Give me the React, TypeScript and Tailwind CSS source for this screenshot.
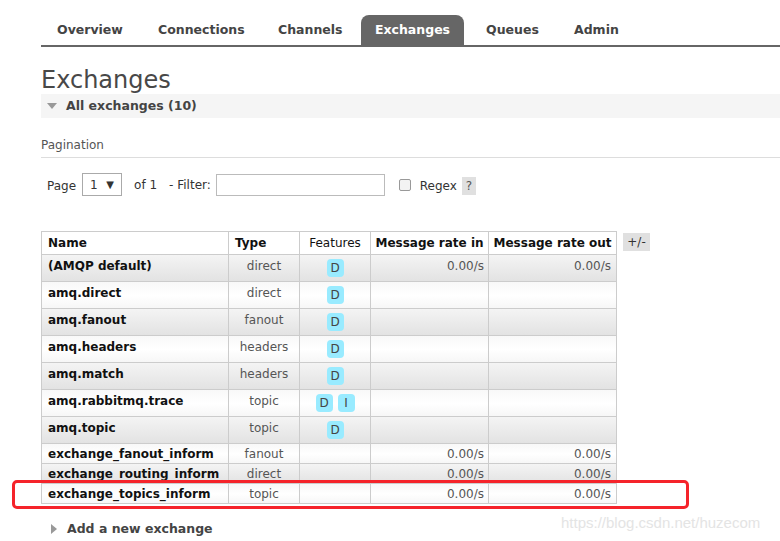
import React from "react";

interface ExchangeRow {
  name: string;
  type: string;
  features: string[];
  rateIn: string;
  rateOut: string;
}

const rows: ExchangeRow[] = [
  { name: "(AMQP default)", type: "direct", features: ["D"], rateIn: "0.00/s", rateOut: "0.00/s" },
  { name: "amq.direct", type: "direct", features: ["D"], rateIn: "", rateOut: "" },
  { name: "amq.fanout", type: "fanout", features: ["D"], rateIn: "", rateOut: "" },
  { name: "amq.headers", type: "headers", features: ["D"], rateIn: "", rateOut: "" },
  { name: "amq.match", type: "headers", features: ["D"], rateIn: "", rateOut: "" },
  { name: "amq.rabbitmq.trace", type: "topic", features: ["D", "I"], rateIn: "", rateOut: "" },
  { name: "amq.topic", type: "topic", features: ["D"], rateIn: "", rateOut: "" },
  { name: "exchange_fanout_inform", type: "fanout", features: [], rateIn: "0.00/s", rateOut: "0.00/s" },
  { name: "exchange_routing_inform", type: "direct", features: [], rateIn: "0.00/s", rateOut: "0.00/s" },
  { name: "exchange_topics_inform", type: "topic", features: [], rateIn: "0.00/s", rateOut: "0.00/s" },
];

export default function App() {
  return (
    <div
      className="relative w-[780px] h-[541px] overflow-hidden bg-white text-[#484848]"
      style={{ fontFamily: '"DejaVu Sans", Verdana, sans-serif' }}
    >
      <div className="pl-[41px] pt-[15px]">
        {/* nav tabs */}
        <div className="flex h-[32px] border-b-2 border-[#666] items-stretch text-[12.5px] font-bold text-[#444]">
          <div className="w-[16px]" />
          <div className="flex items-center w-[101px]">Overview</div>
          <div className="flex items-center w-[120px]">Connections</div>
          <div className="flex items-center w-[83px]">Channels</div>
          <div className="flex items-center justify-center w-[103px] bg-[#666] text-white rounded-t-[8px]">Exchanges</div>
          <div className="w-[22px]" />
          <div className="flex items-center w-[88px]">Queues</div>
          <div className="flex items-center">Admin</div>
        </div>

        <h1 className="mt-[19px] text-[24px] leading-[28px] text-[#484848] font-normal">Exchanges</h1>

        <div className="h-[24px] bg-[#f5f5f5] flex items-center gap-[9px] pl-[6px] text-[12.5px] font-bold text-[#444]">
          <svg width="10" height="6" viewBox="0 0 10 6">
            <polygon points="0,0 10,0 5,6" fill="#999" />
          </svg>
          All exchanges (10)
        </div>

        <div className="mt-[18px] text-[12px] text-[#555] pb-[3px] border-b border-[#ddd]">Pagination</div>

        <div className="mt-[15px] pl-[6px] flex items-center text-[12px] text-[#333]">
          <span className="mt-[2px]">Page</span>
          <div className="ml-[6px] w-[40px] h-[23px] border border-[#aaa] flex items-center justify-between px-[7px]">
            <span>1</span>
            <span className="text-[10px]">▼</span>
          </div>
          <span className="ml-[12px]">of 1</span>
          <span className="ml-[12px]">- Filter:</span>
          <div className="ml-[5px] w-[169px] h-[22px] border border-[#bbb]" />
          <div className="ml-[14px] w-[12px] h-[12px] border border-[#999] rounded-[2px] bg-[#f3f3f3]" />
          <span className="ml-[9px] mt-[2px]">Regex</span>
          <span className="ml-[5px] mt-[2px] w-[14px] h-[18px] bg-[#e0e0e0] flex items-center justify-center text-[#555]">?</span>
        </div>

        <div className="mt-[35px] flex items-start">
          <table className="border-collapse text-[12px] text-[#555]">
            <thead>
              <tr className="h-[23px] bg-white text-[#111]">
                <th className="w-[187px] border border-[#ccc] text-left pl-[6px] font-bold">Name</th>
                <th className="w-[71px] border border-[#ccc] text-left pl-[6px] font-bold">Type</th>
                <th className="w-[71px] border border-[#ccc] text-center font-normal">Features</th>
                <th className="w-[118px] border border-[#ccc] text-center font-bold">Message rate in</th>
                <th className="w-[128px] border border-[#ccc] text-center font-bold">Message rate out</th>
              </tr>
            </thead>
            <tbody>
              {rows.map((r, i) => {
                const tall = r.features.length > 0;
                const bg =
                  i % 2 === 0
                    ? "bg-gradient-to-b from-[#f4f4f4] to-[#e2e2e2]"
                    : "bg-gradient-to-b from-[#f8f8f8] via-white to-[#f6f6f6]";
                return (
                  <tr
                    key={r.name}
                    className={`${bg} ${tall ? "h-[27px] leading-[18px]" : "h-[20px] leading-[16px]"} align-top`}
                  >
                    <td className="border border-[#ccc] pl-[6px] pt-[2px] font-bold text-[#111]">{r.name}</td>
                    <td className="border border-[#ccc] text-center pt-[2px]">{r.type}</td>
                    <td className="border border-[#ccc] pt-[4px]">
                      <div className="flex justify-center gap-[5px]">
                        {r.features.map(f => (
                          <span
                            key={f}
                            className="w-[17px] h-[18px] rounded-[4px] bg-[#99ebff] flex items-center justify-center text-[12px] text-[#444]"
                          >
                            {f}
                          </span>
                        ))}
                      </div>
                    </td>
                    <td className="border border-[#ccc] text-right pr-[4px] pt-[2px]">{r.rateIn}</td>
                    <td className="border border-[#ccc] text-right pr-[5px] pt-[2px]">{r.rateOut}</td>
                  </tr>
                );
              })}
            </tbody>
          </table>
          <span className="ml-[6px] mt-[2px] w-[27px] h-[18px] bg-[#e0e0e0] flex items-center justify-center text-[12px] text-[#333]">
            +/-
          </span>
        </div>

        <div className="mt-[16px] pl-[10px] flex items-center gap-[10px] text-[12.5px] font-bold text-[#444]">
          <svg width="6" height="10" viewBox="0 0 6 10">
            <polygon points="0,0 6,5 0,10" fill="#999" />
          </svg>
          Add a new exchange
        </div>
      </div>

      {/* red annotation box */}
      <div className="absolute left-[12px] top-[480px] w-[677px] h-[29px] border-[3px] border-[#f5232a] rounded-[5px] pointer-events-none" />

      {/* watermark */}
      <div
        className="absolute left-[561px] top-[512px] text-[15px] text-[#e4e4e4]"
        style={{ fontFamily: '"Liberation Sans", Arial, sans-serif' }}
      >
        https://blog.csdn.net/huzecom
      </div>
    </div>
  );
}
